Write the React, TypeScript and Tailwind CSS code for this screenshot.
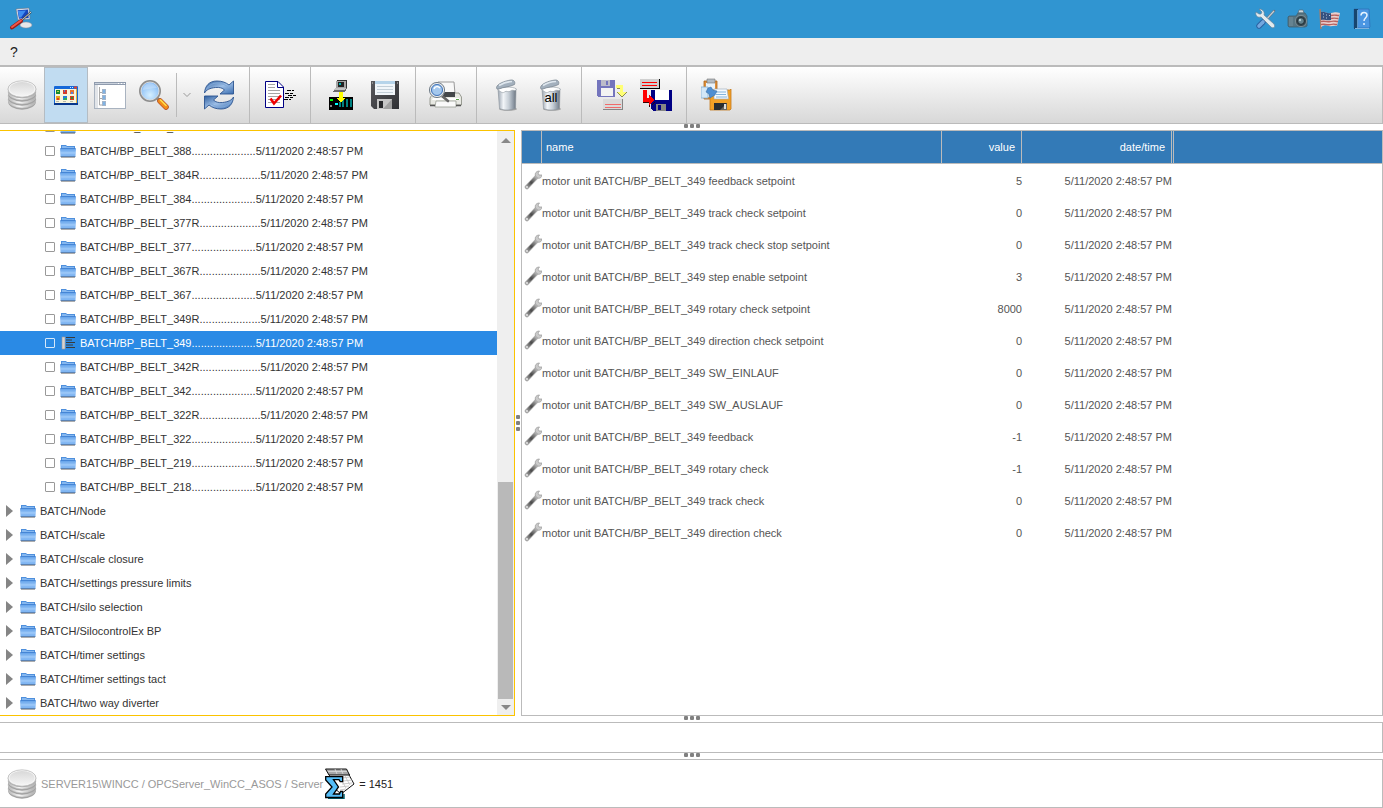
import type { ReactNode } from "react";
import clsx from "clsx";

const DATE = "5/11/2020 2:48:57 PM";

const belts = [
  "388R", "388", "384R", "384", "377R", "377", "367R", "367", "349R",
  "349", "342R", "342", "322R", "322", "219", "218",
];

const folders = [
  "Node", "scale", "scale closure", "settings pressure limits", "silo selection",
  "SilocontrolEx BP", "timer settings", "timer settings tact", "two way diverter",
];

const values = [
  { name: "feedback setpoint", value: 5 },
  { name: "track check setpoint", value: 0 },
  { name: "track check stop setpoint", value: 0 },
  { name: "step enable setpoint", value: 3 },
  { name: "rotary check setpoint", value: 8000 },
  { name: "direction check setpoint", value: 0 },
  { name: "SW_EINLAUF", value: 0 },
  { name: "SW_AUSLAUF", value: 0 },
  { name: "feedback", value: -1 },
  { name: "rotary check", value: -1 },
  { name: "track check", value: 0 },
  { name: "direction check", value: 0 },
];

/* ---------- icons ---------- */

const Gradients = () => (
  <svg width="0" height="0" className="absolute" aria-hidden="true">
    <defs>
      <linearGradient id="folder" x1="0" y1="0" x2="0" y2="1">
        <stop offset="0" stopColor="#5f9fe8" />
        <stop offset="0.5" stopColor="#8fbff5" />
        <stop offset="1" stopColor="#7db4f2" />
      </linearGradient>
      <linearGradient id="disc" x1="0" y1="0" x2="0" y2="1">
        <stop offset="0" stopColor="#d8d8d8" />
        <stop offset="1" stopColor="#f4f4f4" />
      </linearGradient>
      <linearGradient id="discSide" x1="0" y1="0" x2="1" y2="0">
        <stop offset="0" stopColor="#b4b4b4" />
        <stop offset="0.4" stopColor="#f6f6f6" />
        <stop offset="1" stopColor="#a8a8a8" />
      </linearGradient>
      <linearGradient id="can" x1="0" y1="0" x2="1" y2="0">
        <stop offset="0" stopColor="#9aa4b0" />
        <stop offset="0.3" stopColor="#f2f5f8" />
        <stop offset="0.6" stopColor="#c6ced6" />
        <stop offset="0.85" stopColor="#8f99a5" />
        <stop offset="1" stopColor="#6d7680" />
      </linearGradient>
      <linearGradient id="blueArrow" x1="0" y1="0" x2="1" y2="1">
        <stop offset="0" stopColor="#2f5f9f" />
        <stop offset="0.5" stopColor="#9dbee6" />
        <stop offset="1" stopColor="#3a6db0" />
      </linearGradient>
      <radialGradient id="lens" cx="0.5" cy="0.7" r="0.7">
        <stop offset="0" stopColor="#d5efff" />
        <stop offset="1" stopColor="#78b2f4" />
      </radialGradient>
      <linearGradient id="floppyDark" x1="0" y1="0" x2="1" y2="1">
        <stop offset="0" stopColor="#5a5a5e" />
        <stop offset="1" stopColor="#2f3034" />
      </linearGradient>
      <linearGradient id="wrench" x1="0" y1="1" x2="1" y2="0">
        <stop offset="0" stopColor="#9a9a9a" />
        <stop offset="0.45" stopColor="#4a4a4a" />
        <stop offset="0.8" stopColor="#8a8a8a" />
        <stop offset="1" stopColor="#bbb" />
      </linearGradient>
    </defs>
  </svg>
);

const DatabaseIcon = () => (
  <svg width="30" height="30" viewBox="0 0 30 30">
    {[20.5, 16.5, 12.5].map((y) => (
      <g key={y}>
        <ellipse cx="15" cy={y + 0.8} rx="14" ry="8.400" fill="#a2a2a2" />
        <ellipse cx="15" cy={y - 0.6} rx="14" ry="8" fill="url(#discSide)" stroke="#c8c8c8" strokeWidth="0.500" />
      </g>
    ))}
    <ellipse cx="15" cy="9.700" rx="14.200" ry="8.600" fill="#b0b0b0" />
    <ellipse cx="15" cy="9" rx="14" ry="8.200" fill="#f6f6f6" stroke="#b4b4b4" strokeWidth="0.700" />
    <ellipse cx="15" cy="8.800" rx="12.400" ry="6.900" fill="url(#disc)" />
  </svg>
);

const IconsWindowIcon = () => (
  <svg width="24" height="19" viewBox="0 0 24 19">
    <rect width="24" height="19" rx="1" fill="#1668d8" />
    <rect x="1" y="3" width="21" height="14" fill="#f8f5dc" />
    <rect x="0" y="17" width="24" height="2" fill="#07368c" />
    <rect x="22" y="3" width="1" height="14" fill="#e0b040" />
    <path d="M16 1h1v1h-1zM18 1h1v1h-1z" fill="#cfe2ff" />
    <rect x="20" y="0.500" width="3" height="2" fill="#e5452a" />
    <rect x="2" y="4" width="4" height="4" fill="#178a2c" />
    <rect x="9" y="4" width="4" height="4" fill="#d23b2a" />
    <rect x="16" y="4" width="4" height="4" fill="#e87433" />
    <rect x="3" y="5" width="2" height="1" fill="#b7d34b" />
    <rect x="17" y="6" width="2" height="2" fill="#5d80d8" />
    <rect x="10" y="4" width="1" height="2" fill="#5077d0" />
    <rect x="2" y="10" width="4" height="4" fill="#e9a520" />
    <rect x="3" y="12" width="2" height="2" fill="#e33b26" />
    <rect x="9" y="10" width="4" height="4" fill="#2480d6" />
    <rect x="10" y="12" width="3" height="2" fill="#2fae4d" />
    <rect x="16" y="10" width="4" height="4" fill="#d4401f" />
    <rect x="17" y="11" width="2" height="2" fill="#3c8b36" />
    <path d="M2 15.500h3M9 15.500h3M16 15.500h3" stroke="#b9b7a5" />
  </svg>
);

const TreeWindowIcon = () => (
  <svg width="32" height="27" viewBox="0 0 32 27">
    <rect x="0.500" y="0.500" width="31" height="26" fill="#fff" stroke="#a9b3c0" />
    <rect x="0" y="0" width="32" height="3" fill="#8f9bad" />
    <path d="M1 1.500h30" stroke="#c9d1dc" />
    <path d="M24 1.500h1M27 1.500h1M30 1.500h1" stroke="#fff" />
    <rect x="1" y="3" width="3" height="23" fill="#e2e5e9" />
    <path d="M5.500 5v18h4M5.500 10.500h4M5.500 16.500h4" fill="none" stroke="#aaa" />
    {[7, 13, 19].map((y) => (
      <g key={y}>
        <rect x="8.500" y={y + 0.5} width="3" height="4" fill="#eef4fb" stroke="#a3b4c9" />
        <rect x="9" y={y + 1} width="2" height="3" fill="#7eb2e4" />
      </g>
    ))}
  </svg>
);

const MagnifierIcon = () => (
  <svg width="32" height="32" viewBox="0 0 32 32">
    <path d="M19 19l3 3" stroke="#8b8b8b" strokeWidth="3" />
    <path d="M22 22l6 6" stroke="#b04a22" strokeWidth="5.500" strokeLinecap="round" />
    <path d="M22 22l6 6" stroke="#f28b1c" strokeWidth="4.200" strokeLinecap="round" />
    <path d="M22.500 21l5.500 5.500" stroke="#ffe04c" strokeWidth="1.600" strokeLinecap="round" />
    <circle cx="12" cy="12" r="10" fill="url(#lens)" stroke="#8e8e8e" strokeWidth="2" />
    <circle cx="12" cy="12" r="9" fill="none" stroke="#e6e6e6" strokeWidth="0.800" />
    <path d="M5 11c0-5 4-7 7-7s6 2 7 5c-5 0-9 1-14 2z" fill="#fff" opacity="0.250" />
  </svg>
);

const RefreshIcon = () => (
  <svg width="32" height="30" viewBox="0 0 32 30">
    <path d="M1.500 13C2 6 6 1 14 1c5 0 9 1.500 12 4l4.500-4V14H17l4.500-4c-2-2-5-3-9-2.500C7 8 3 10 1.500 13z" fill="url(#blueArrow)" stroke="#2b5490" strokeWidth="0.900" />
    <path d="M30.500 17C30 24 26 29 18 29c-5 0-9-1.500-12-4l-4.500 4V16H15l-4.500 4c2 2 5 3 9 2.500 5.500-.5 9.500-2.500 11-5.500z" fill="url(#blueArrow)" stroke="#2b5490" strokeWidth="0.900" />
    <path d="M4 8.500C6 5 10 3 14 3c5 0 9 2 12 5" fill="none" stroke="#7fa8d8" />
    <path d="M28 21.500C26 25 22 27 18 27c-5 0-9-2-12-5" fill="none" stroke="#7fa8d8" />
  </svg>
);

const CheckReportIcon = () => (
  <svg width="31" height="28" viewBox="0 0 31 28">
    <path d="M.5 .5H13L18.500 6V26.500H.5z" fill="#fff" stroke="#000084" />
    <path d="M12.500 1v5.500H18" fill="none" stroke="#000084" />
    <path d="M3 3.500h7M3 6.500h7M3 9.500h12M3 12.500h12M3 15.500h12M3 18.500h12M3 21.500h12" stroke="#a5a5a5" />
    <path d="M5.500 17.500l3.500 5 7-8" fill="none" stroke="#f00000" strokeWidth="2.600" />
    <path d="M22 9.500h7M20 12.500h8M23 14.500h8M20 16.500h8M19 18.500h7" stroke="#000" strokeDasharray="4 1" />
  </svg>
);

const PlcIcon = () => (
  <svg width="24" height="30" viewBox="0 0 24 30" shapeRendering="crispEdges">
    <path d="M8 0h10v9h-10z" fill="#333" />
    <path d="M7 1h10v7H7z" fill="#a5a5a5" />
    <path d="M9 2h6v5H9z" fill="#222" />
    <path d="M10 3h2v2h-2z" fill="#00b6b6" />
    <path d="M6 8h12l-2 4H4z" fill="#6a6a6a" />
    <path d="M6 8h11l-2 2H5z" fill="#c4c4c4" />
    <rect y="17" width="24" height="13" fill="#000" />
    <rect x="1" y="19" width="3" height="2" fill="#0f0" />
    <rect x="6" y="23" width="3" height="2" fill="#0ff" />
    <rect x="1" y="25" width="2" height="2" fill="#888" />
    <path d="M11 22v5M14 19v8M18 19v8M22 19v8" stroke="#008080" strokeWidth="2" />
    <path d="M10 12h4v6h3l-5 4-5-4h3z" fill="#ff0" />
  </svg>
);

const FloppyIcon = () => (
  <svg width="30" height="30" viewBox="0 0 30 30">
    <path d="M1 1h28v28H4l-3-3z" fill="url(#floppyDark)" />
    <rect x="5" y="1" width="20" height="14" fill="#f1f6fa" />
    <rect x="5" y="1" width="20" height="3" fill="#b6d4ea" />
    <path d="M7 6.500h16M7 9.500h16M7 12.500h16" stroke="#c3cfd8" />
    <rect x="7" y="19" width="15" height="10" fill="#c6c6c6" />
    <path d="M13 29l9-10v10z" fill="#a1a1a1" />
    <rect x="9" y="21" width="4" height="7" fill="#28292c" />
    <path d="M2 3h1M27 3h1" stroke="#ccc" strokeWidth="1" />
  </svg>
);

const PrintPreviewIcon = () => (
  <svg width="34" height="28" viewBox="0 0 34 28">
    <path d="M9 1h16l1 12H8z" fill="#f8f8f8" stroke="#9a9a9a" />
    <path d="M4 12h26l2.500 4v8H1v-7z" fill="#e7e8e2" stroke="#85897f" strokeWidth="0.800" />
    <path d="M10 11h16v5H10z" fill="#44474a" />
    <path d="M4 17h26l1 2H3z" fill="#fff" />
    <path d="M7 20h20v6H6z" fill="#fafafa" stroke="#9b9e96" strokeWidth="0.800" />
    <path d="M1 24.500h5M27 24.500h5" stroke="#555" strokeWidth="1.500" />
    <rect x="27" y="18" width="3" height="1" fill="#5ba44c" />
    <path d="M13 15l6 5" stroke="#666" strokeWidth="2.600" strokeLinecap="round" />
    <circle cx="8" cy="9" r="7" fill="#a4c8ee" stroke="#e9e9e9" strokeWidth="2" />
    <circle cx="8" cy="9" r="7.600" fill="none" stroke="#65737f" strokeWidth="0.900" />
    <circle cx="8" cy="9" r="5.500" fill="none" stroke="#4273b7" />
    <path d="M5 8c1-3 4-3 6-1" fill="none" stroke="#fff" strokeWidth="1.500" />
  </svg>
);

const TrashIcon = ({ all = false }: { all?: boolean }) => (
  <svg width="24" height="34" viewBox="0 0 24 34">
    <ellipse cx="13" cy="31" rx="9" ry="1.800" fill="#666" opacity="0.500" />
    <path d="M3 11h18l-.5 19.500c-5 2-12 2-16 0z" fill="url(#can)" stroke="#8a929b" strokeWidth="0.600" />
    <path d="M2.500 11c3-2 15-3 19 0-1 3-4 0-6 2s-4-1-6 1-5-1-7-3z" fill="#fff" stroke="#9ba3ab" strokeWidth="0.700" />
    <path d="M1.500 9.500C2 6 9 3 16 2c3-.3 4.500 2 3.500 4.500C15 9 8 9 4 11c-2 .3-2.800-.5-2.500-1.500z" fill="#a3b0bd" stroke="#75818c" strokeWidth="0.700" />
    <path d="M4 7.500C8 5 12 3.500 17 3.500" stroke="#dfe7ee" strokeWidth="1.600" fill="none" />
    {all && (
      <text x="12" y="24" textAnchor="middle" fontSize="13" fontFamily="Liberation Sans, sans-serif" fill="#000">
        all
      </text>
    )}
  </svg>
);

const LoadDiskIcon = () => (
  <svg width="32" height="32" viewBox="0 0 32 32" shapeRendering="crispEdges">
    <path d="M1 1h18v17H2l-1-1z" fill="#7475bd" />
    <rect x="5" y="1" width="9" height="6" fill="#bcbcc9" />
    <rect x="10" y="2" width="2" height="4" fill="#7475bd" />
    <rect x="5" y="9" width="12" height="8" fill="#f3f3f3" />
    <path d="M21 7h6v6h4l-5 6-5-6h3v-3h-3z" fill="#8b8b55" />
    <path d="M20 6h7v7h3l-4 5-4-5h2V9h-4z" fill="#ffff74" />
    <rect x="7" y="20" width="20" height="11" fill="#858585" />
    <rect x="7" y="20" width="19" height="10" fill="#dadada" />
    <path d="M9 25.500h16M9 28.500h16" stroke="#f06b6b" />
  </svg>
);

const SaveDiskIcon = () => (
  <svg width="32" height="32" viewBox="0 0 32 32" shapeRendering="crispEdges">
    <rect x="0" y="0" width="20" height="10" fill="#000" />
    <rect x="0" y="0" width="19" height="9" fill="#d0d0d0" />
    <rect x="2" y="3" width="15" height="1" fill="#f00" />
    <rect x="2" y="6" width="15" height="1" fill="#f00" />
    <path d="M11 11h21v21H13l-2-2z" fill="#000084" />
    <rect x="15" y="11" width="14" height="10" fill="#fff" />
    <rect x="16" y="25" width="10" height="7" fill="#858585" />
    <rect x="18" y="26" width="3" height="5" fill="#000084" />
    <path d="M3 22h7v5l5-5v2l-6 4v-4H3z" fill="#300" />
    <path d="M3 11h4v8h2v-3l5 5-5 5v-3H3z" fill="#f00" />
  </svg>
);

const PasteDiskIcon = () => (
  <svg width="32" height="34" viewBox="0 0 32 34">
    <path d="M3 3h13v18H3z" fill="#e0903a" stroke="#a9661d" strokeWidth="0.800" />
    <path d="M5 5h9v14H5z" fill="#e8f2fa" />
    <path d="M6 1h8v4H6z" fill="#b4bbc1" stroke="#777" strokeWidth="0.600" />
    <path d="M0 9h7v11H0z" fill="#d3e7f7" stroke="#86b0d2" strokeWidth="0.800" />
    <path d="M9 14l2-2h18l1-1v20l-1 1H9z" fill="#f2a026" stroke="#c47a1c" strokeWidth="0.800" />
    <path d="M13 11h13l1.500 10H13z" fill="#f4faff" stroke="#9ab" strokeWidth="0.600" />
    <path d="M15 14h10M15 16.500h10M15 19h11" stroke="#83b4dc" />
    <path d="M7 10l3-1 2 3 4 1-2 4-5 3-1-4-3-2z" fill="#4f8fd2" stroke="#34699f" strokeWidth="0.500" />
    <path d="M13 25h13v7H13z" fill="#292d31" />
    <path d="M19 32l7-7v7z" fill="#68655e" />
    <rect x="23" y="26" width="2" height="5" fill="#ddd" />
  </svg>
);

const AppIcon = () => (
  <svg width="24" height="24" viewBox="0 0 24 24">
    <path d="M7 2l13-1 1 11-12 1z" fill="#e3e7ef" stroke="#6c7688" strokeWidth="0.600" />
    <path d="M8.500 3.300l10.500-.8.700 8.500-9.700.8z" fill="#1746bd" />
    <path d="M9 4l8-.6-5 7-2 .2z" fill="#3e8df2" />
    <ellipse cx="17" cy="18" rx="6" ry="3" fill="#e7e7ea" stroke="#8b8d99" strokeWidth="0.500" />
    <path d="M22 5l-9 8" stroke="#444" strokeWidth="1.800" />
    <path d="M22 5l-9 8" stroke="#ddd" strokeWidth="0.900" />
    <path d="M12 14l-9 6.500" stroke="#9e1a15" strokeWidth="4" strokeLinecap="round" />
    <path d="M12 13.500L3 20" stroke="#f0584c" strokeWidth="2" strokeLinecap="round" />
  </svg>
);

const ToolsIcon = () => (
  <svg width="22" height="22" viewBox="0 0 22 22">
    <path d="M19 3l-9 10" stroke="#687582" strokeWidth="2.400" strokeLinecap="round" />
    <path d="M19 3l-9 10" stroke="#c4d0d8" strokeWidth="1.200" />
    <path d="M8 14l-4 4" stroke="#2b5f9f" strokeWidth="5.400" strokeLinecap="round" />
    <path d="M8 14l-4 4" stroke="#74a8df" strokeWidth="3.600" strokeLinecap="round" />
    <path d="M4 1l3 3-1 2-2 0-3-2c-1 3 1 6 5 5l10 10c2 2 5 0 3-3L9 7c1-4-2-6-5-6z" fill="#e1eaee" stroke="#66839a" strokeWidth="0.700" />
  </svg>
);

const CameraIcon = () => (
  <svg width="22" height="20" viewBox="0 0 22 20">
    <path d="M11 4l1-3h4l1 3z" fill="#cbd7dd" stroke="#50616b" strokeWidth="0.600" />
    <path d="M1 8l1-1h7l2-3h7l2 3v10l-2 1H2l-1-1z" fill="#587683" stroke="#40606e" strokeWidth="0.800" />
    <path d="M3 8v9M5 8v9" stroke="#7e9aa6" strokeWidth="0.800" />
    <circle cx="14" cy="12" r="5.600" fill="#35474f" stroke="#87999f" strokeWidth="0.800" />
    <circle cx="14" cy="12" r="3.400" fill="#64828c" stroke="#1f2c33" />
    <circle cx="13" cy="11" r="1.200" fill="#b6cfd4" />
  </svg>
);

const FlagIcon = () => (
  <svg width="22" height="22" viewBox="0 0 22 22">
    <path d="M1 1l1 20" stroke="#a87d68" strokeWidth="1.500" />
    <path d="M2 4c4-1 6 2 10 1s6-1 9 0l-3 13c-3-1-5 1-8 0s-5-1-8 1z" fill="#e8cfcd" />
    <path d="M12 7.500c4-1 5 0 8 0M12 10.500c4-1 5 0 7.500 0M2 13.500c5-1 7 1 10 0 3-1 4 0 7 0M2 16.500c5-1 7 1 10 0 3-1 4 0 6 0" fill="none" stroke="#b8615e" strokeWidth="1.300" />
    <path d="M2 4c4-1 6 2 10 1v7c-4 1-7-1-10 0z" fill="#34507f" />
    <path d="M4 6h1M7 7h1M10 7.500h1M4 9h1M7 10h1" stroke="#bccbdd" />
  </svg>
);

const HelpBookIcon = () => (
  <svg width="20" height="22" viewBox="0 0 20 22">
    <path d="M2 1h15l1 18-1 1H2z" fill="#4b96e2" stroke="#2c6db5" strokeWidth="0.700" />
    <path d="M2 1h4v20H2z" fill="#17456e" />
    <path d="M5.500 2v18" stroke="#7ebbed" strokeWidth="0.700" />
    <path d="M3 20.500h14" stroke="#7fb2dc" />
    <path d="M9 7.500c0-4 6-4 6-.5 0 3-3 3-3 6M12 15v2" fill="none" stroke="#e6f3ff" strokeWidth="1.500" />
  </svg>
);

const FolderIcon = () => (
  <svg width="16" height="14" viewBox="0 0 16 14">
    <path d="M1 5V1h5l1 1h8v3z" fill="#4e8fdc" />
    <path d="M2 2h4l1 1h7v2H2z" fill="#86b8f0" />
    <path d="M0 4.500h16L15.500 12H.5z" fill="url(#folder)" />
    <path d="M.5 4.500h15" stroke="#3f80d2" strokeWidth="0.900" />
    <path d="M1 9h14" stroke="#a9d0fb" strokeWidth="0.800" />
    <path d="M.5 12.500h15" stroke="#5b82b2" />
    <path d="M1 13.500h14" stroke="#8a8a8a" strokeWidth="0.700" />
  </svg>
);

const ListIcon = () => (
  <svg width="16" height="14" viewBox="0 0 16 14">
    <rect x="2" y="1" width="3" height="12" fill="#d9d3cf" stroke="#9a9a9a" strokeWidth="0.600" />
    <path d="M6 1.500h9M6 4h6M6 6.500h9M6 9h7M6 11.500h9" stroke="#3a3a3a" strokeWidth="1.200" />
  </svg>
);

const WrenchIcon = () => (
  <svg width="18" height="20" viewBox="0 0 18 20">
    <path d="M3 17L12.500 7" stroke="#b5b5b5" strokeWidth="4.600" strokeLinecap="round" />
    <path d="M3 17L12.500 7" stroke="url(#wrench)" strokeWidth="3.200" strokeLinecap="round" />
    <path d="M15.500 1c-3 0-5 2-4 5l2 2c2.500 1 4.500-1 4.500-3h-3l-1-2z" fill="#cacaca" stroke="#999" strokeWidth="0.700" />
    <circle cx="3" cy="17" r="0.900" fill="#eee" />
  </svg>
);

const SumIcon = () => (
  <svg width="30" height="31" viewBox="0 0 30 31">
    <path d="M4 6l19-1 6 11-13 10-9-8z" fill="#fff" stroke="#111" />
    <path d="M.5 1h21l3 6H4z" fill="#a8a8a8" stroke="#111" />
    <path d="M3 3.500h19M10 1l2 5M16 1l2 5" stroke="#ddd" strokeWidth="0.800" />
    <path d="M17 10l8-1M18 13l9-1M17 16l10-1M15 19l9-1M15 22l6-1M20 8l5 9M16 11l5 9" stroke="#c4c4c4" strokeWidth="0.900" />
    <path d="M3 30.500h16V26" fill="none" stroke="#067" strokeWidth="1.500" />
    <path d="M.7 8.700h17v5h-2.500l-1.200-2H8.500l5 7.300-5 7h6l1-2.500h2.200v6H.7v-3.500L7 19 .7 12z" fill="#55bdf7" stroke="#000" strokeWidth="1.300" />
  </svg>
);

/* ---------- toolbar ---------- */

type ToolButtonProps = {
  label: string;
  active?: boolean;
  children: ReactNode;
};

const ToolButton = ({ label, active, children }: ToolButtonProps) => (
  <button
    type="button"
    aria-label={label}
    title={label}
    className={clsx(
      "flex w-11 shrink-0 items-center justify-center",
      active && "border border-[#b4bcc3] bg-[#c1dcf1]",
    )}
  >
    {children}
  </button>
);

const ToolGroup = ({ children }: { children: ReactNode }) => (
  <div className="flex border-r border-[#bbbbbb] px-2 last:border-r-0">{children}</div>
);

const Toolbar = () => (
  <div className="flex h-[59px] shrink-0 border-t-2 border-r border-b border-[#bbbbbb] bg-linear-to-b from-white to-[#d8d8d8]">
    <div className="flex border-r border-[#bbbbbb] pr-2">
      <ToolButton label="Data source"><DatabaseIcon /></ToolButton>
      <ToolButton label="Icon view" active><IconsWindowIcon /></ToolButton>
      <ToolButton label="Tree view"><TreeWindowIcon /></ToolButton>
      <ToolButton label="Search"><MagnifierIcon /></ToolButton>
      <button
        type="button"
        aria-label="Search options"
        className="my-1.5 flex w-[21px] items-center justify-center border-l border-[#bbbbbb]"
      >
        <svg width="8" height="6" viewBox="0 0 8 6">
          <path d="M.5 1l3.500 3.500L7.500 1" fill="none" stroke="#999" />
        </svg>
      </button>
      <ToolButton label="Refresh"><RefreshIcon /></ToolButton>
    </div>
    <ToolGroup>
      <ToolButton label="Check report"><CheckReportIcon /></ToolButton>
    </ToolGroup>
    <ToolGroup>
      <ToolButton label="Write to PLC"><PlcIcon /></ToolButton>
      <ToolButton label="Save"><FloppyIcon /></ToolButton>
    </ToolGroup>
    <ToolGroup>
      <ToolButton label="Print preview"><PrintPreviewIcon /></ToolButton>
    </ToolGroup>
    <ToolGroup>
      <ToolButton label="Delete"><TrashIcon /></ToolButton>
      <ToolButton label="Delete all"><TrashIcon all /></ToolButton>
    </ToolGroup>
    <ToolGroup>
      <ToolButton label="Load from disk"><LoadDiskIcon /></ToolButton>
      <ToolButton label="Save to disk"><SaveDiskIcon /></ToolButton>
    </ToolGroup>
    <ToolGroup>
      <ToolButton label="Paste and save"><PasteDiskIcon /></ToolButton>
    </ToolGroup>
  </div>
);

const TitleBar = () => (
  <header className="flex h-[38px] shrink-0 items-center justify-between bg-[#3095d1] pr-[5px] pl-[9px]">
    <AppIcon />
    <div className="flex items-center">
      <button type="button" aria-label="Settings" className="flex w-8 justify-center"><ToolsIcon /></button>
      <button type="button" aria-label="Screenshot" className="flex w-8 justify-center"><CameraIcon /></button>
      <button type="button" aria-label="Language" className="flex w-8 justify-center"><FlagIcon /></button>
      <button type="button" aria-label="Help" className="flex w-8 justify-center"><HelpBookIcon /></button>
    </div>
  </header>
);

const Splitter = ({ vertical = false }: { vertical?: boolean }) => (
  <div className={clsx("flex shrink-0 justify-center gap-0.5", vertical ? "w-1.5 flex-col items-center" : "h-1.5")}>
    <i className="size-1 rounded-[1px] bg-[#808080]" />
    <i className="size-1 rounded-[1px] bg-[#808080]" />
    <i className="size-1 rounded-[1px] bg-[#808080]" />
  </div>
);

/* ---------- tree ---------- */

const BeltRow = ({ belt }: { belt: string }) => {
  const selected = belt === "349";
  const dots = ".".repeat(belt.endsWith("R") ? 20 : 21);
  return (
    <li className={clsx("shrink-0", selected && "bg-[#2a8ae5] text-white")}>
      <label className="flex h-6 items-center pl-[45px]">
        <input
          type="checkbox"
          className={clsx(
            "mr-[5px] size-[10px] shrink-0 appearance-none rounded-[1px] border",
            selected ? "border-[#d5e8fa]" : "border-[#999999] bg-white",
          )}
        />
        {selected ? <ListIcon /> : <FolderIcon />}
        <span className="ml-1 whitespace-nowrap">
          BATCH/BP_BELT_{belt}{dots}{DATE}
        </span>
      </label>
    </li>
  );
};

const FolderRow = ({ name }: { name: string }) => (
  <li className="flex h-6 shrink-0 items-center pl-1.5">
    <button type="button" aria-label={`Expand ${name}`} className="mr-[7px]">
      <svg width="7" height="12" viewBox="0 0 7 12">
        <path d="M0 0l7 6-7 6z" fill="#858585" />
      </svg>
    </button>
    <FolderIcon />
    <span className="ml-1">BATCH/{name}</span>
  </li>
);

const TreePanel = () => (
  <section className="flex min-h-0 border-y border-r border-[#fbc300] bg-white">
    <ul className="flex min-h-0 min-w-0 flex-1 flex-col justify-end overflow-hidden text-[#333333]">
      {belts.map((belt) => (
        <BeltRow key={belt} belt={belt} />
      ))}
      {folders.map((name) => (
        <FolderRow key={name} name={name} />
      ))}
    </ul>
    <div className="flex w-[17px] shrink-0 flex-col bg-[#efefef] px-px">
      <button type="button" aria-label="Scroll up" className="flex h-[18px] items-center justify-center">
        <svg width="10" height="5" viewBox="0 0 10 5"><path d="M0 5l5-5 5 5z" fill="#888" /></svg>
      </button>
      <div className="flex-333" />
      <div className="flex-217 bg-[#b9b9b9]" />
      <button type="button" aria-label="Scroll down" className="flex h-4 items-center justify-center">
        <svg width="10" height="5" viewBox="0 0 10 5"><path d="M0 0l5 5 5-5z" fill="#888" /></svg>
      </button>
    </div>
  </section>
);

/* ---------- value table ---------- */

const ValueTable = () => (
  <section className="min-h-0 overflow-hidden border border-[#bbbbbb] bg-white">
    <table className="w-full table-fixed border-separate border-spacing-0">
      <colgroup>
        <col className="w-5" />
        <col className="w-[400px]" />
        <col className="w-20" />
        <col className="w-[150px]" />
        <col />
      </colgroup>
      <thead className="bg-[#337ab7] text-white">
        <tr className="h-[33px]">
          <th className="border-r border-b border-[#bbbbbb]" />
          <th className="border-r border-b border-[#bbbbbb] pl-1 text-left font-normal">name</th>
          <th className="border-r border-b border-[#bbbbbb] pr-1.5 text-right font-normal">value</th>
          <th className="border-r border-b border-[#bbbbbb] pr-1.5 text-right font-normal">date/time</th>
          <th className="border-b border-[#bbbbbb] pl-px text-left">
            <span className="block h-8 border-l border-[#bbbbbb]" />
          </th>
        </tr>
      </thead>
      <tbody className="text-[#555555]">
        {values.map(({ name, value }) => (
          <tr key={name} className="h-8">
            <td className="p-0 pl-0.5"><WrenchIcon /></td>
            <td className="p-0 pt-0.5 whitespace-nowrap">motor unit BATCH/BP_BELT_349 {name}</td>
            <td className="p-0 pt-0.5 text-right">{value}</td>
            <td className="p-0 pt-0.5 text-right whitespace-nowrap">{DATE}</td>
            <td />
          </tr>
        ))}
      </tbody>
    </table>
  </section>
);

const StatusBar = () => (
  <footer className="flex h-[49px] shrink-0 items-center border-y border-r border-[#bbbbbb] pl-[7px]">
    <DatabaseIcon />
    <span className="ml-1 whitespace-nowrap text-[#999999]">
      SERVER15\WINCC / OPCServer_WinCC_ASOS / Server
    </span>
    <span className="ml-0.5 flex items-center gap-1 text-[#222222]">
      <SumIcon />= 1451
    </span>
  </footer>
);

const App = () => {
  return (
    <div className="flex h-screen flex-col bg-white font-['Liberation_Sans',Arial,sans-serif] text-[11px] leading-4">
      <Gradients />
      <TitleBar />
      <nav className="flex h-[27px] shrink-0 items-center bg-[#eeeeee] px-2.5">
        <button type="button" className="text-sm text-[#222222]">?</button>
      </nav>
      <Toolbar />
      <Splitter />
      <main className="grid min-h-0 flex-1 grid-cols-[minmax(0,515fr)_6px_minmax(0,862fr)] grid-rows-[minmax(0,1fr)]">
        <TreePanel />
        <Splitter vertical />
        <ValueTable />
      </main>
      <Splitter />
      <div className="h-[31px] shrink-0 border-y border-r border-[#bbbbbb]" />
      <Splitter />
      <StatusBar />
    </div>
  );
};

export default App;
